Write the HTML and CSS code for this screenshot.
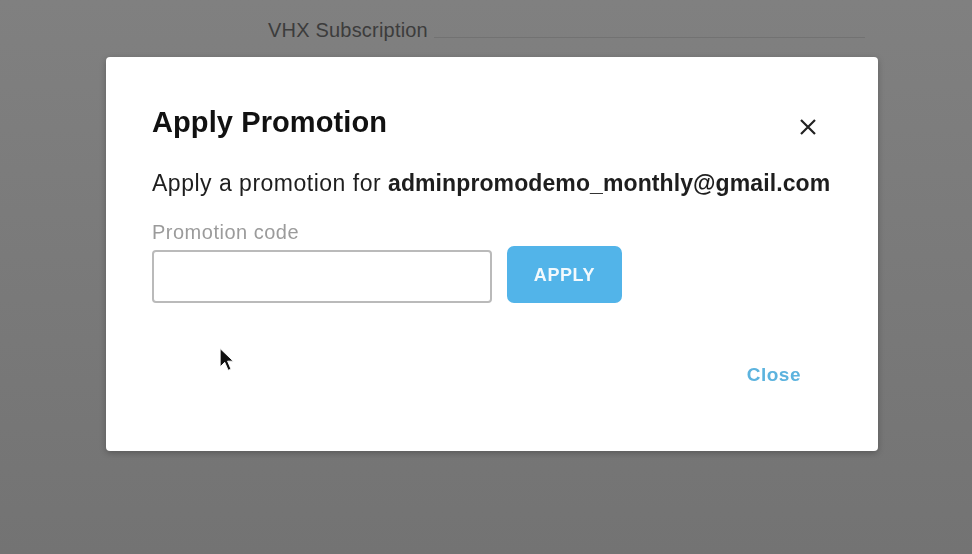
FILE: index.html
```html
<!DOCTYPE html>
<html lang="en">
<head>
    <meta charset="UTF-8">
    <meta name="viewport" content="width=device-width, initial-scale=1.0">
    <title>Apply Promotion</title>
    <link rel="stylesheet" href="styles.css">
</head>
<body>
    <div class="page">
        <div class="page-header">
            <span class="page-title">VHX Subscription</span>
            <span class="page-rule"></span>
        </div>
    </div>

    <div class="overlay">
        <div class="modal">
            <div class="modal-head">
                <h2>Apply Promotion</h2>
                <button class="modal-x" aria-label="Close">
                    <svg width="18" height="18" viewBox="0 0 18 18">
                        <path d="M2 2 L16 16 M16 2 L2 16" stroke="#222" stroke-width="2.2" fill="none"/>
                    </svg>
                </button>
            </div>
            <p class="modal-text">Apply a promotion for <b>adminpromodemo_monthly@gmail.com</b></p>
            <label for="promo-code">Promotion code</label>
            <div class="promo-row">
                <input type="text" id="promo-code" name="promo-code">
                <button class="apply-btn">APPLY</button>
            </div>
            <div class="modal-foot">
                <a href="#" class="close-link">Close</a>
            </div>
        </div>
    </div>

    <!-- mouse pointer seen in the recording -->
    <svg class="cursor" width="16" height="26" viewBox="0 0 14 22">
        <path d="M1 1 L1 17 L5 13 L8 20 L10.5 19 L7.5 12 L12.5 12 Z" fill="#111" stroke="#fff" stroke-width="0.8"/>
    </svg>
</body>
</html>
```

FILE: styles.css
```css
* {
    margin: 0;
    padding: 0;
    box-sizing: border-box;
}

body {
    font-family: 'Liberation Sans', Arial, sans-serif;
    background: linear-gradient(#808080, #737373);
    min-height: 100vh;
    overflow: hidden;
}

.page-header {
    display: flex;
    padding: 18px 107px 0 268px;
}

.page-title {
    font-size: 20px;
    line-height: 24px;
    letter-spacing: 0.2px;
    color: #3c3c3c;
}

.page-rule {
    flex: 1;
    height: 1px;
    margin-left: 6px;
    margin-bottom: 4px;
    align-self: flex-end;
    background: #727272;
}

.overlay {
    position: fixed;
    top: 0;
    left: 0;
    right: 0;
    bottom: 0;
    padding: 57px 0 0 106px;
}

.modal {
    width: 772px;
    background: #fff;
    border-radius: 4px;
    box-shadow: 0 2px 6px rgba(0,0,0,0.25);
    padding: 48px 61px 63px 46px;
}

.modal-head {
    display: flex;
    justify-content: space-between;
    align-items: flex-start;
}

.modal-head h2 {
    font-size: 29px;
    line-height: 34px;
    letter-spacing: 0.1px;
    color: #111;
}

.modal-x {
    background: none;
    border: none;
    margin-top: 13px;
    width: 18px;
    height: 18px;
    cursor: pointer;
}

.modal-x svg {
    display: block;
}

.modal-text {
    margin-top: 30px;
    font-size: 23px;
    line-height: 28px;
    letter-spacing: 0.5px;
    white-space: nowrap;
    color: #1e1e1e;
}

.modal-text b {
    letter-spacing: 0.1px;
}

label {
    display: block;
    margin-top: 23px;
    margin-bottom: 2px;
    font-size: 20px;
    line-height: 24px;
    letter-spacing: 0.5px;
    color: #9b9b9b;
}

.promo-row {
    display: flex;
    align-items: flex-end;
    gap: 15px;
}

.promo-row input {
    width: 340px;
    height: 53px;
    border: 2px solid #bababa;
    border-radius: 4px;
    padding: 0 12px;
    font-size: 18px;
}

.apply-btn {
    width: 115px;
    height: 57px;
    border: none;
    border-radius: 7px;
    background-color: #52b4e9;
    color: #f2f9fd;
    font-family: inherit;
    font-size: 18px;
    font-weight: bold;
    letter-spacing: 0.6px;
    padding-top: 2px;
    cursor: pointer;
}

.modal-foot {
    margin-top: 60px;
    margin-right: 16px;
    text-align: right;
    line-height: 24px;
}

.close-link {
    font-size: 19px;
    font-weight: bold;
    letter-spacing: 0.5px;
    color: #5cb3de;
    text-decoration: none;
}

.cursor {
    position: absolute;
    left: 219px;
    top: 347px;
}
```
